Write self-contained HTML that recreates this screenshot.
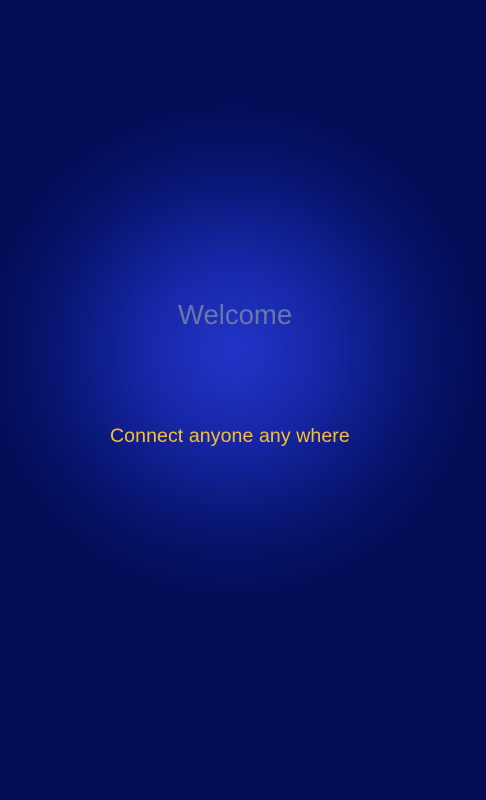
<!DOCTYPE html>
<html><head><style>
html,body{margin:0;padding:0;width:486px;height:800px;overflow:hidden;}
body{background:radial-gradient(circle 255px at 233px 350px,#2234c8 0%,#1627a6 35%,#0b1a80 60%,#051265 80%,#020c55 100%);background-color:#000b52;font-family:"Liberation Sans",sans-serif;position:relative;}
.w{position:absolute;left:178px;top:299px;font-size:27.5px;color:#6a76a6;white-space:nowrap;}
.c{position:absolute;left:110px;top:425px;font-size:19.5px;color:#f5c22e;white-space:nowrap;letter-spacing:0.1px;}
</style></head><body>
<div class="w">Welcome</div>
<div class="c">Connect anyone any where</div>
</body></html>
